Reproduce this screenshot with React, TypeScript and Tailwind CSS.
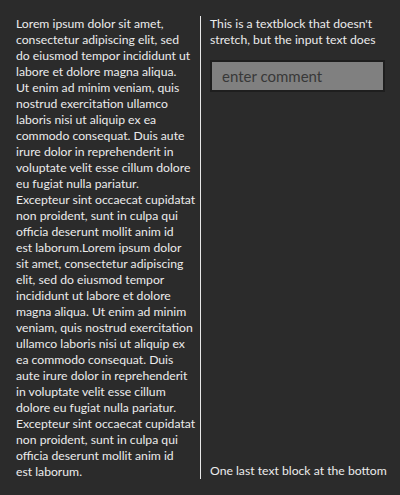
const lines = [
  "Lorem ipsum dolor sit amet,",
  "consectetur adipiscing elit, sed",
  "do eiusmod tempor incididunt ut",
  "labore et dolore magna aliqua.",
  "Ut enim ad minim veniam, quis",
  "nostrud exercitation ullamco",
  "laboris nisi ut aliquip ex ea",
  "commodo consequat. Duis aute",
  "irure dolor in reprehenderit in",
  "voluptate velit esse cillum dolore",
  "eu fugiat nulla pariatur.",
  "Excepteur sint occaecat cupidatat",
  "non proident, sunt in culpa qui",
  "officia deserunt mollit anim id",
  "est laborum.Lorem ipsum dolor",
  "sit amet, consectetur adipiscing",
  "elit, sed do eiusmod tempor",
  "incididunt ut labore et dolore",
  "magna aliqua. Ut enim ad minim",
  "veniam, quis nostrud exercitation",
  "ullamco laboris nisi ut aliquip ex",
  "ea commodo consequat. Duis",
  "aute irure dolor in reprehenderit",
  "in voluptate velit esse cillum",
  "dolore eu fugiat nulla pariatur.",
  "Excepteur sint occaecat cupidatat",
  "non proident, sunt in culpa qui",
  "officia deserunt mollit anim id",
  "est laborum.",
];

const font = { fontFamily: 'Lato, "Open Sans", sans-serif' };

export default function App() {
  return (
    <div
      className="h-[495px] w-[400px] bg-[#2b2b2b] p-4 text-[12.2px] leading-4 text-[#ececec] flex"
      style={font}
    >
      {/* long paragraph, wrapped as in the shot */}
      <div className="w-[184px] shrink-0">
        {lines.map((l, i) => (
          <div key={i} className="whitespace-nowrap">
            {l}
          </div>
        ))}
      </div>
      <div className="flex-1 flex flex-col border-l border-[#e8e8e8] pl-[9px]">
        <p>
          This is a textblock that doesn't
          <br />
          stretch, but the input text does
        </p>
        <input
          type="text"
          placeholder="enter comment"
          className="mt-[12px] h-8 w-[175px] border-2 border-[#1e1e1e] bg-[#808080] px-[10px] text-[15px] text-black placeholder:text-[#383838] outline-none"
          style={font}
        />
        <div className="flex-1" />
        <p className="whitespace-nowrap">One last text block at the bottom</p>
      </div>
    </div>
  );
}
